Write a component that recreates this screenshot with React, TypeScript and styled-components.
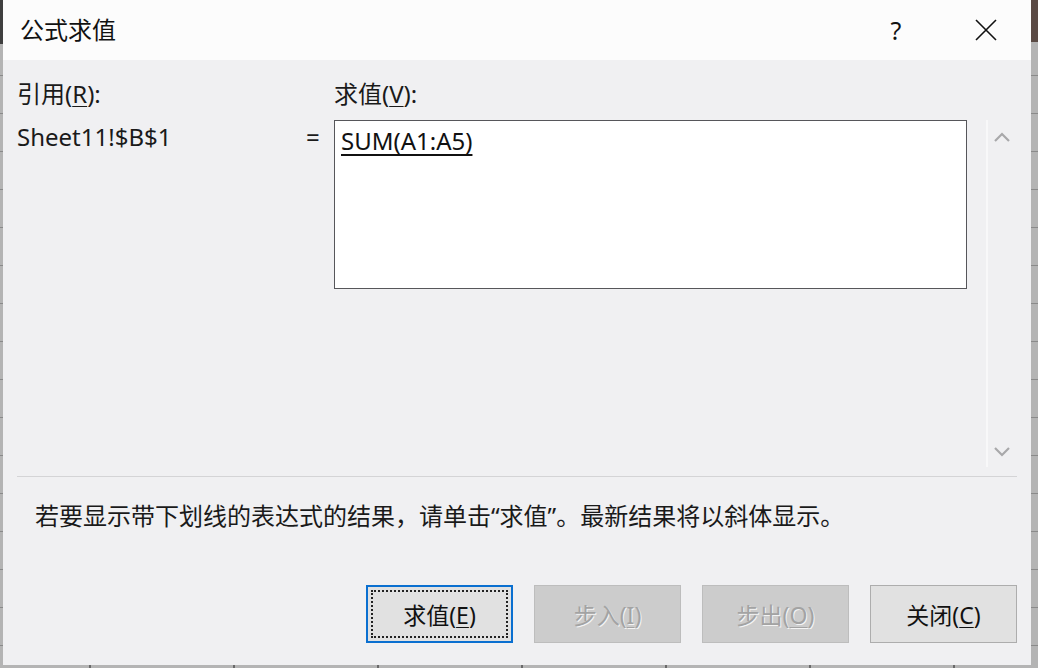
import React from 'react';
import styled, { createGlobalStyle } from 'styled-components';

/* -------------------- Global -------------------- */
const GlobalStyle = createGlobalStyle`
  html, body {
    margin: 0;
    padding: 0;
    width: 1038px;
    height: 668px;
    overflow: hidden;
  }
  body {
    font-family: "Noto Sans", "Noto Sans CJK SC", sans-serif;
    color: #1a1a1a;
  }
`;

const font = `"Noto Sans", "Noto Sans CJK SC", sans-serif`;

/* -------------------- Sheet behind the dialog -------------------- */
const Sheet = styled.div`
  width: 1038px;
  height: 668px;
  box-sizing: border-box;
  padding: 0 7px 3px 3px;
  background:
    linear-gradient(#3f3f3f, #3f3f3f) left top / 3px 44px no-repeat,
    linear-gradient(#5a4a44, #5a4a44) right top / 7px 42px no-repeat,
    repeating-linear-gradient(to bottom, transparent 0 37px, #8a8a8a 37px 38px) left top / 3px 100% no-repeat,
    repeating-linear-gradient(to bottom, transparent 0 37px, #8a8a8a 37px 38px) right top / 7px 100% no-repeat,
    repeating-linear-gradient(to right, transparent 0 89px, #6a6a6a 89px 91px, transparent 91px 144px) left bottom / 100% 3px no-repeat,
    #b4b4b4;
  display: flex;
`;

/* -------------------- Dialog -------------------- */
const Dialog = styled.div`
  flex: 1;
  min-width: 0;
  display: flex;
  flex-direction: column;
  background: #f0f0f2;
  font-family: ${font};
`;

const TitleBar = styled.div`
  height: 60px;
  flex: none;
  display: flex;
  align-items: center;
  background: #fcfcfc;
  padding-left: 17px;
`;

const Title = styled.div`
  flex: 1;
  font-size: 24px;
  color: #111;
  margin-top: -4px;
`;

const TitleButton = styled.button`
  width: 90px;
  height: 60px;
  border: none;
  background: transparent;
  display: flex;
  align-items: center;
  justify-content: center;
  padding: 0;
  font-family: ${font};
  font-size: 25px;
  color: #111;
`;

const Body = styled.div`
  flex: 1;
  display: flex;
  flex-direction: column;
  padding: 0 14px 0 14px;
`;

const EvalGrid = styled.div`
  display: grid;
  grid-template-columns: 283px 34px 633px minmax(0, 1fr);
  grid-template-rows: 60px 347px;
`;

const Label = styled.div`
  font-size: 24px;
  align-self: end;
  padding-bottom: 14px;
  line-height: 1;
`;

const Key = styled.span`
  text-decoration: underline;
  text-underline-offset: 3px;
  text-decoration-thickness: 1px;
`;

const RefValue = styled.div`
  font-size: 24px;
  line-height: 1;
  padding-top: 5px;
`;

const Equals = styled.div`
  font-size: 24px;
  line-height: 1;
  padding: 5px 0 0 6px;
`;

const ValueBox = styled.div`
  height: 169px;
  box-sizing: border-box;
  border: 1px solid #56565a;
  background: #ffffff;
  padding: 3px 6px;
`;

const Expr = styled.span`
  font-size: 24px;
  text-decoration: underline;
  text-underline-offset: 4px;
  text-decoration-thickness: 1.5px;
  color: #111;
`;

const ScrollTrack = styled.div`
  margin-left: 19px;
  width: 28px;
  border-left: 2px solid #f8f8f9;
  display: flex;
  flex-direction: column;
  justify-content: space-between;
  align-items: center;
  padding: 12px 0 10px;
`;

const Separator = styled.hr`
  margin: 9px 0 0 0;
  border: none;
  border-top: 1px solid #d4d4d6;
  height: 0;
`;

const Message = styled.div`
  font-size: 24px;
  line-height: 1;
  padding: 27px 0 0 18px;
`;

const ButtonRow = styled.div`
  display: flex;
  justify-content: flex-end;
  gap: 21px;
  margin-top: 57px;
`;

const DialogButton = styled.button<{ $primary?: boolean; $disabled?: boolean }>`
  position: relative;
  width: 147px;
  height: 58px;
  box-sizing: border-box;
  font-family: ${font};
  font-size: 23px;
  padding: 0;
  color: ${(p) => (p.$disabled ? '#a3a3a3' : '#111')};
  text-shadow: ${(p) => (p.$disabled ? '1px 1px 0 #f4f4f4' : 'none')};
  background: ${(p) => (p.$disabled ? '#cccccc' : '#e1e1e1')};
  border: ${(p) =>
    p.$primary ? '2px solid #0a6fd0' : p.$disabled ? '1px solid #bdbdbd' : '1px solid #adadad'};

  &::after {
    content: '';
    display: ${(p) => (p.$primary ? 'block' : 'none')};
    position: absolute;
    inset: 3px;
    border: 2px dotted #222;
  }
`;

/* -------------------- Icons -------------------- */
const CloseIcon = () => (
  <svg width="22" height="22" viewBox="0 0 22 22">
    <path d="M1 1 L21 21 M21 1 L1 21" stroke="#111" strokeWidth="1.6" fill="none" />
  </svg>
);

const Chevron = ({ up }: { up?: boolean }) => (
  <svg width="16" height="10" viewBox="0 0 16 10">
    <path
      d={up ? 'M1 9 L8 2 L15 9' : 'M1 1 L8 8 L15 1'}
      stroke="#a8a8aa"
      strokeWidth="2.2"
      fill="none"
    />
  </svg>
);

/* -------------------- App -------------------- */
export default function App() {
  return (
    <>
      <GlobalStyle />
      <Sheet>
        <Dialog>
          <TitleBar>
            <Title>公式求值</Title>
            <TitleButton>?</TitleButton>
            <TitleButton>
              <CloseIcon />
            </TitleButton>
          </TitleBar>
          <Body>
            <EvalGrid>
              <Label>
                引用(<Key>R</Key>):
              </Label>
              <div />
              <Label>
                求值(<Key>V</Key>):
              </Label>
              <div />
              <RefValue>Sheet11!$B$1</RefValue>
              <Equals>=</Equals>
              <div>
                <ValueBox>
                  <Expr>SUM(A1:A5)</Expr>
                </ValueBox>
              </div>
              <ScrollTrack>
                <Chevron up />
                <Chevron />
              </ScrollTrack>
            </EvalGrid>
            <Separator />
            <Message>若要显示带下划线的表达式的结果，请单击“求值”。最新结果将以斜体显示。</Message>
            <ButtonRow>
              <DialogButton $primary>
                求值(<Key>E</Key>)
              </DialogButton>
              <DialogButton $disabled>
                步入(<Key>I</Key>)
              </DialogButton>
              <DialogButton $disabled>
                步出(<Key>O</Key>)
              </DialogButton>
              <DialogButton>
                关闭(<Key>C</Key>)
              </DialogButton>
            </ButtonRow>
          </Body>
        </Dialog>
      </Sheet>
    </>
  );
}
